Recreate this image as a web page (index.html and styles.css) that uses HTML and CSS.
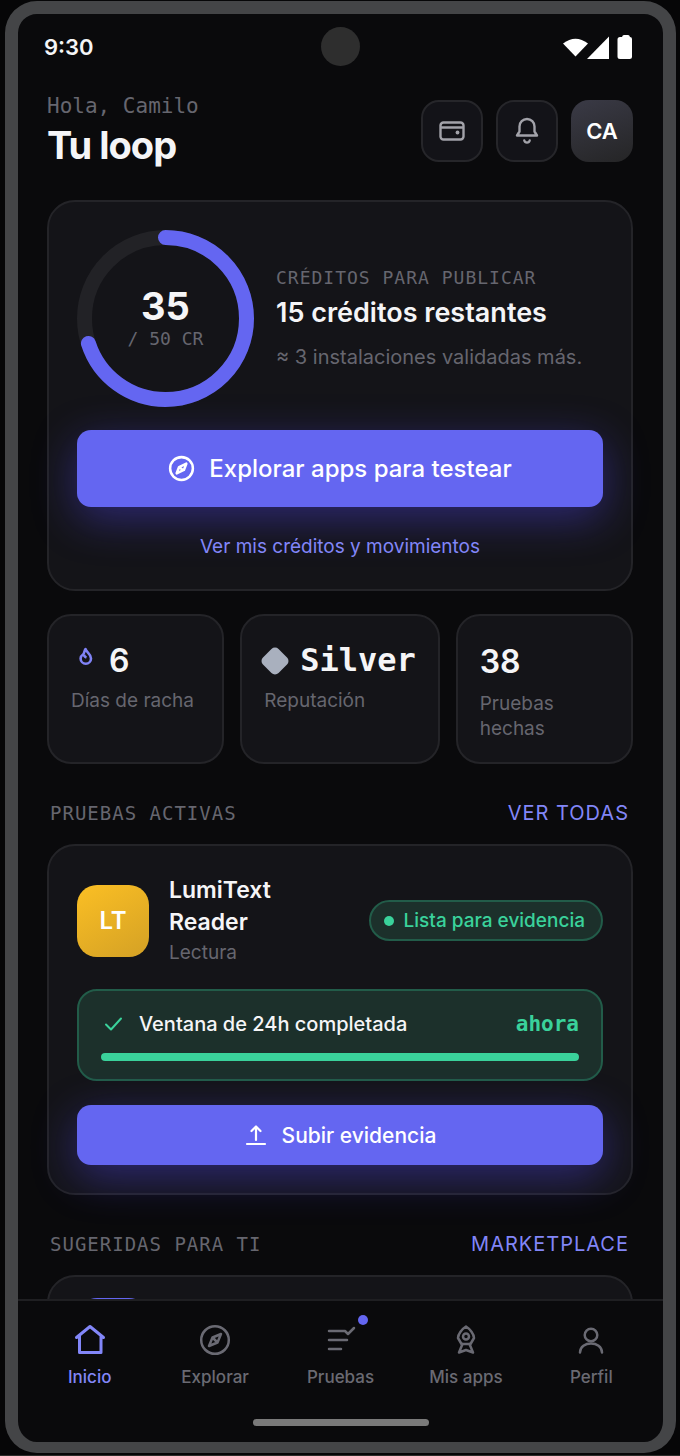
FILE: index.html
```html
<!DOCTYPE html>
<html lang="es">
<head>
  <meta charset="UTF-8">
  <meta name="viewport" content="width=device-width, initial-scale=1">
  <title>Tu loop</title>
  <link rel="stylesheet" href="styles.css">
</head>
<body>
  <div class="phone">
    <div class="status-bar">
      <span class="time">9:30</span>
      <span class="camera"></span>
      <svg class="status-icons" width="69" height="24" viewBox="0 0 69 24" fill="#fff">
        <path d="M0 8.500Q12.500-1 25 8.500L12.500 21.500Z"/>
        <path d="M24 24L46 1.500V24Z"/>
        <path d="M57 2H59Q59.500 0 61 0H65Q66.500 0 67 2Q69 2 69 4V21.500Q69 24 66.500 24H57Q54.500 24 54.500 21.500V4.500Q54.500 2 57 2Z"/>
      </svg>
    </div>

    <main class="content">
      <header class="header">
        <div class="greeting">
          <p class="hello">Hola, Camilo</p>
          <h1>Tu loop</h1>
        </div>
        <button type="button" class="icon-button" aria-label="Créditos">
          <svg width="28" height="28" viewBox="0 0 28 28" fill="none" stroke="currentColor" stroke-width="2.400">
            <rect x="2.500" y="5.500" width="23" height="17" rx="3"/>
            <path d="M3 10.500H25"/>
            <circle cx="19.500" cy="15.500" r="1.900" fill="currentColor" stroke="none"/>
          </svg>
        </button>
        <button type="button" class="icon-button" aria-label="Notificaciones">
          <svg width="28" height="28" viewBox="0 0 28 28" fill="none" stroke="currentColor" stroke-width="2.400" stroke-linecap="round" stroke-linejoin="round">
            <path d="M4 18.500H24L21.500 14.500V9.500A7.500 7.500 0 0 0 6.500 9.500V14.500Z"/>
            <path d="M11.300 23.500A2.800 2.800 0 0 0 16.700 23.500"/>
          </svg>
        </button>
        <button type="button" class="icon-button avatar">CA</button>
      </header>

      <section class="card credits">
        <div class="credits-top">
          <div class="ring">
            <svg viewBox="0 0 177 177" fill="none" stroke-width="15">
              <circle cx="88.500" cy="88.500" r="81" stroke="#222226"/>
              <circle cx="88.500" cy="88.500" r="81" stroke="#6466f1" stroke-linecap="round" pathLength="100" stroke-dasharray="70 100" transform="rotate(-90 88.500 88.500)"/>
            </svg>
            <div class="ring-label">
              <strong>35</strong>
              <span>/ 50 CR</span>
            </div>
          </div>
          <div class="credits-info">
            <p class="overline">CRÉDITOS PARA PUBLICAR</p>
            <h2>15 créditos restantes</h2>
            <p class="hint">≈ 3 instalaciones validadas más.</p>
          </div>
        </div>
        <button type="button" class="primary large">
          <svg width="27" height="27" viewBox="0 0 28 28" fill="none" stroke="currentColor" stroke-width="2.600" stroke-linejoin="round">
            <circle cx="14" cy="14" r="11.800"/>
            <path d="M19 9L16.500 15.500L9 19L11.500 12.500ZM12 13L15.500 15.500"/>
          </svg>
          Explorar apps para testear
        </button>
        <a href="#" class="credits-link">Ver mis créditos y movimientos</a>
      </section>

      <section class="stats">
        <div class="stat">
          <div class="stat-value">
            <svg width="30" height="30" viewBox="0 0 30 30" fill="none" stroke="#8083f6" stroke-width="2.600" stroke-linejoin="round">
              <path d="M14.500 3C15 6 20 7.500 20 12.500A5.200 5.200 0 0 1 9.600 12.500C9.600 10.500 10.500 9.500 12 8.500C13.500 7.500 13 5 14.500 3Z"/>
              <path d="M13 8.500C13 10.500 14 11 15.500 11.500"/>
            </svg>
            6
          </div>
          <p>Días de racha</p>
        </div>
        <div class="stat">
          <div class="stat-value tier"><span class="gem"></span>Silver</div>
          <p>Reputación</p>
        </div>
        <div class="stat">
          <div class="stat-value plain">38</div>
          <p>Pruebas hechas</p>
        </div>
      </section>

      <div class="section-head">
        <h3>PRUEBAS ACTIVAS</h3>
        <a href="#">VER TODAS</a>
      </div>

      <section class="card test">
        <div class="test-top">
          <span class="app-icon">LT</span>
          <div class="app-name">
            <h4>LumiText Reader</h4>
            <p>Lectura</p>
          </div>
          <span class="pill">Lista para evidencia</span>
        </div>
        <div class="window">
          <div class="window-row">
            <svg width="24" height="24" viewBox="0 0 24 24" fill="none" stroke="#3ad29b" stroke-width="2" stroke-linecap="round" stroke-linejoin="round">
              <path d="M5 12.500L10 17.500L20 6.500"/>
            </svg>
            <span class="window-title">Ventana de 24h completada</span>
            <span class="window-time">ahora</span>
          </div>
          <div class="bar"><div class="bar-fill" style="width: 100%"></div></div>
        </div>
        <button type="button" class="primary">
          <svg width="24" height="24" viewBox="0 0 24 24" fill="none" stroke="currentColor" stroke-width="2.200" stroke-linecap="round" stroke-linejoin="round">
            <path d="M12 17V4M7.500 8L12 3.500L16.500 8M3 21H21"/>
          </svg>
          Subir evidencia
        </button>
      </section>

      <div class="section-head">
        <h3>SUGERIDAS PARA TI</h3>
        <a href="#">MARKETPLACE</a>
      </div>

      <section class="card suggested">
        <span class="app-icon violet"></span>
      </section>
    </main>

    <nav class="tabs">
      <a href="#" class="tab active">
        <svg width="32" height="32" viewBox="0 0 32 32" fill="none" stroke="currentColor" stroke-width="3" stroke-linecap="round" stroke-linejoin="round">
          <path d="M2.500 13.500L16 2.500L29.500 13.500M5.500 12V28.500H27V12"/>
        </svg>
        Inicio
      </a>
      <a href="#" class="tab">
        <svg width="32" height="32" viewBox="0 0 32 32" fill="none" stroke="currentColor" stroke-width="2.500" stroke-linejoin="round">
          <circle cx="16" cy="16" r="13.800"/>
          <path d="M22 10L18.500 18.500L10 22L13.500 13.500ZM13.500 13.500L18.500 18.500"/>
        </svg>
        Explorar
      </a>
      <a href="#" class="tab">
        <span class="tab-icon">
          <svg width="32" height="32" viewBox="0 0 32 32" fill="none" stroke="currentColor" stroke-width="2.500" stroke-linecap="round" stroke-linejoin="round">
            <path d="M4 7H20L23 10L29 4M4 16H22M4 25H16"/>
          </svg>
          <span class="dot"></span>
        </span>
        Pruebas
      </a>
      <a href="#" class="tab">
        <svg width="32" height="32" viewBox="0 0 32 32" fill="none" stroke="currentColor" stroke-width="2.500" stroke-linecap="round" stroke-linejoin="round">
          <path d="M16 2.500C20 5 24 10 24 14L20.500 20H11.500L8 14C8 10 12 5 16 2.500Z"/>
          <circle cx="16" cy="12.500" r="3"/>
          <path d="M12.500 20L9 28.500L16 26L23 28.500L19.500 20"/>
        </svg>
        Mis apps
      </a>
      <a href="#" class="tab">
        <svg width="32" height="32" viewBox="0 0 32 32" fill="none" stroke="currentColor" stroke-width="2.500" stroke-linecap="round">
          <circle cx="16" cy="11" r="6.300"/>
          <path d="M5 28.500C5 16.500 27 16.500 27 28.500"/>
        </svg>
        Perfil
      </a>
    </nav>
    <div class="home-bar"></div>
  </div>
</body>
</html>
```

FILE: styles.css
```css
* {
  box-sizing: border-box;
}
body {
  margin: 0;
  height: 100vh;
  padding: 1px 4px 2px 5px;
  background: #060607;
  border-bottom: 1px solid #2c2c2a;
  color: #f5f5f7;
  font-family: Inter, "Liberation Sans", sans-serif;
  font-size: 20px;
}
h1, h2, h3, h4, p {
  margin: 0;
}
button {
  font-family: inherit;
  cursor: pointer;
}
a {
  color: #8286f8;
  text-decoration: none;
}
svg {
  flex: none;
}

.phone {
  display: flex;
  flex-direction: column;
  height: 100%;
  border: 13px solid #444547;
  border-bottom-width: 11px;
  border-radius: 32px;
  background: #0a0a0c;
  overflow: hidden;
}

.status-bar {
  flex: none;
  display: grid;
  grid-template-columns: 1fr auto 1fr;
  align-items: center;
  height: 65px;
  padding: 0 26px;
}
.time {
  font-size: 22px;
  font-weight: 600;
}
.camera {
  width: 39px;
  height: 39px;
  border-radius: 50%;
  background: #2e2e2e;
}
.status-icons {
  justify-self: end;
  margin-right: 5px;
}

.content {
  flex: 1;
  min-height: 0;
  padding: 14px 30px 0 29px;
  overflow: hidden;
}

.header {
  display: flex;
  align-items: center;
  gap: 13px;
  height: 76px;
  margin-bottom: 31px;
}
.greeting {
  flex: 1;
}
.hello {
  color: #66666f;
  font-family: "DejaVu Sans Mono", monospace;
  font-size: 21px;
  line-height: 28px;
}
h1 {
  font-size: 38px;
  font-weight: 700;
  line-height: 50px;
  letter-spacing: -1px;
}
.icon-button {
  display: flex;
  align-items: center;
  justify-content: center;
  width: 62px;
  height: 62px;
  padding: 0;
  border: 2px solid #26262a;
  border-radius: 18px;
  background: #131318;
  color: #a2a2a9;
}
.avatar {
  border: none;
  background: linear-gradient(160deg, #3a3a46, #252526);
  color: #fff;
  font-size: 22px;
  font-weight: 600;
}

.card {
  padding: 28px;
  border: 2px solid #242428;
  border-radius: 28px;
  background: #141418;
}

.credits-top {
  display: flex;
  align-items: center;
  gap: 22px;
  margin-bottom: 23px;
}
.ring {
  flex: none;
  display: grid;
  width: 177px;
  height: 177px;
}
.ring svg,
.ring-label {
  grid-area: 1 / 1;
}
.ring-label {
  display: flex;
  flex-direction: column;
  align-items: center;
  justify-content: center;
}
.ring-label strong {
  font-size: 38px;
  font-weight: 700;
  line-height: 40px;
}
.ring-label span {
  color: #66666f;
  font-family: "DejaVu Sans Mono", monospace;
  font-size: 18px;
  line-height: 26px;
}
.overline {
  color: #66666f;
  font-family: "DejaVu Sans Mono", monospace;
  font-size: 18px;
  line-height: 24px;
  letter-spacing: 1px;
}
h2 {
  margin: 5px 0 12px;
  font-size: 27px;
  font-weight: 600;
  line-height: 36px;
}
.hint {
  color: #66666f;
  font-size: 20px;
  line-height: 28px;
  white-space: nowrap;
}

.primary {
  display: flex;
  align-items: center;
  justify-content: center;
  gap: 14px;
  width: 100%;
  height: 60px;
  border: none;
  border-radius: 14px;
  background: #6466f1;
  box-shadow: 0 12px 44px rgba(80, 70, 240, 0.42);
  color: #fff;
  font-size: 21px;
  font-weight: 500;
}
.primary.large {
  height: 77px;
  font-size: 24px;
}
.credits-link {
  display: block;
  margin-top: 26px;
  font-size: 19px;
  line-height: 28px;
  text-align: center;
}

.stats {
  display: grid;
  grid-template-columns: 8fr 9fr 8fr;
  gap: 16px;
  margin-top: 23px;
}
.stat {
  padding: 22px 0 21px 22px;
  border: 2px solid #242428;
  border-radius: 24px;
  background: #141418;
}
.stat p {
  margin-top: 5px;
  padding-right: 22px;
  color: #66666f;
  font-size: 19px;
  line-height: 25px;
}
.stat:first-child p {
  padding-right: 0;
}
.stat-value {
  display: flex;
  align-items: center;
  gap: 8px;
  font-size: 32px;
  font-weight: 600;
  line-height: 45px;
}
.stat-value.plain {
  line-height: 48px;
}
.tier {
  gap: 14px;
  font-family: "DejaVu Sans Mono", monospace;
  font-weight: 700;
}
.gem {
  width: 22px;
  height: 22px;
  border-radius: 5px;
  background: #a9b0be;
  transform: rotate(45deg);
}

.section-head {
  display: flex;
  align-items: center;
  justify-content: space-between;
  margin: 37px 4px 19px 3px;
  line-height: 24px;
}
h3 {
  color: #66666f;
  font-family: "DejaVu Sans Mono", monospace;
  font-size: 19px;
  font-weight: 400;
  letter-spacing: 1px;
}
.section-head a {
  font-size: 20px;
  letter-spacing: 1px;
}

.test-top {
  display: flex;
  align-items: center;
  gap: 20px;
  margin-bottom: 22px;
}
.app-icon {
  flex: none;
  display: flex;
  align-items: center;
  justify-content: center;
  width: 72px;
  height: 72px;
  border-radius: 20px;
  background: linear-gradient(150deg, #fbbf24, #d4a125);
  color: #fff;
  font-size: 24px;
  font-weight: 600;
}
.app-icon.violet {
  background: #6466f1;
}
.app-name {
  flex: 1;
  padding-right: 20px;
}
h4 {
  font-size: 23px;
  font-weight: 600;
  line-height: 32px;
}
.app-name p {
  color: #66666f;
  font-size: 19px;
  line-height: 29px;
}
.pill {
  display: flex;
  align-items: center;
  gap: 10px;
  height: 41px;
  padding: 0 16px 0 13px;
  border: 2px solid #225c49;
  border-radius: 21px;
  background: #1c302b;
  color: #3ad29b;
  font-size: 19px;
  font-weight: 500;
  white-space: nowrap;
}
.pill::before {
  content: "";
  width: 10px;
  height: 10px;
  border-radius: 50%;
  background: #3ad29b;
}

.window {
  margin-bottom: 24px;
  padding: 20px 22px 18px;
  border: 2px solid #225c49;
  border-radius: 20px;
  background: #1c302b;
}
.window-row {
  display: flex;
  align-items: center;
  gap: 14px;
  line-height: 26px;
}
.window-title {
  flex: 1;
  font-weight: 500;
}
.window-time {
  color: #3ad29b;
  font-family: "DejaVu Sans Mono", monospace;
  font-size: 21px;
  font-weight: 700;
}
.bar {
  height: 8px;
  margin-top: 16px;
  border-radius: 4px;
  background: #141418;
}
.bar-fill {
  height: 100%;
  border-radius: 4px;
  background: #3ad29b;
}
.suggested {
  padding-top: 21px;
}

.tabs {
  flex: none;
  display: flex;
  padding: 23px 9px 0;
  border-top: 2px solid #1f1f22;
}
.tab {
  flex: 1;
  display: flex;
  flex-direction: column;
  align-items: center;
  gap: 9px;
  color: #6a6a73;
  font-size: 17px;
  font-weight: 500;
  line-height: 24px;
}
.tab.active {
  color: #8286f8;
}
.tab-icon {
  position: relative;
  height: 32px;
}
.dot {
  position: absolute;
  top: -9px;
  right: -11px;
  width: 10px;
  height: 10px;
  border-radius: 50%;
  background: #6466f1;
}
.home-bar {
  flex: none;
  width: 176px;
  height: 7px;
  margin: 30px auto 16px;
  border-radius: 4px;
  background: #7a7a7a;
}
```
